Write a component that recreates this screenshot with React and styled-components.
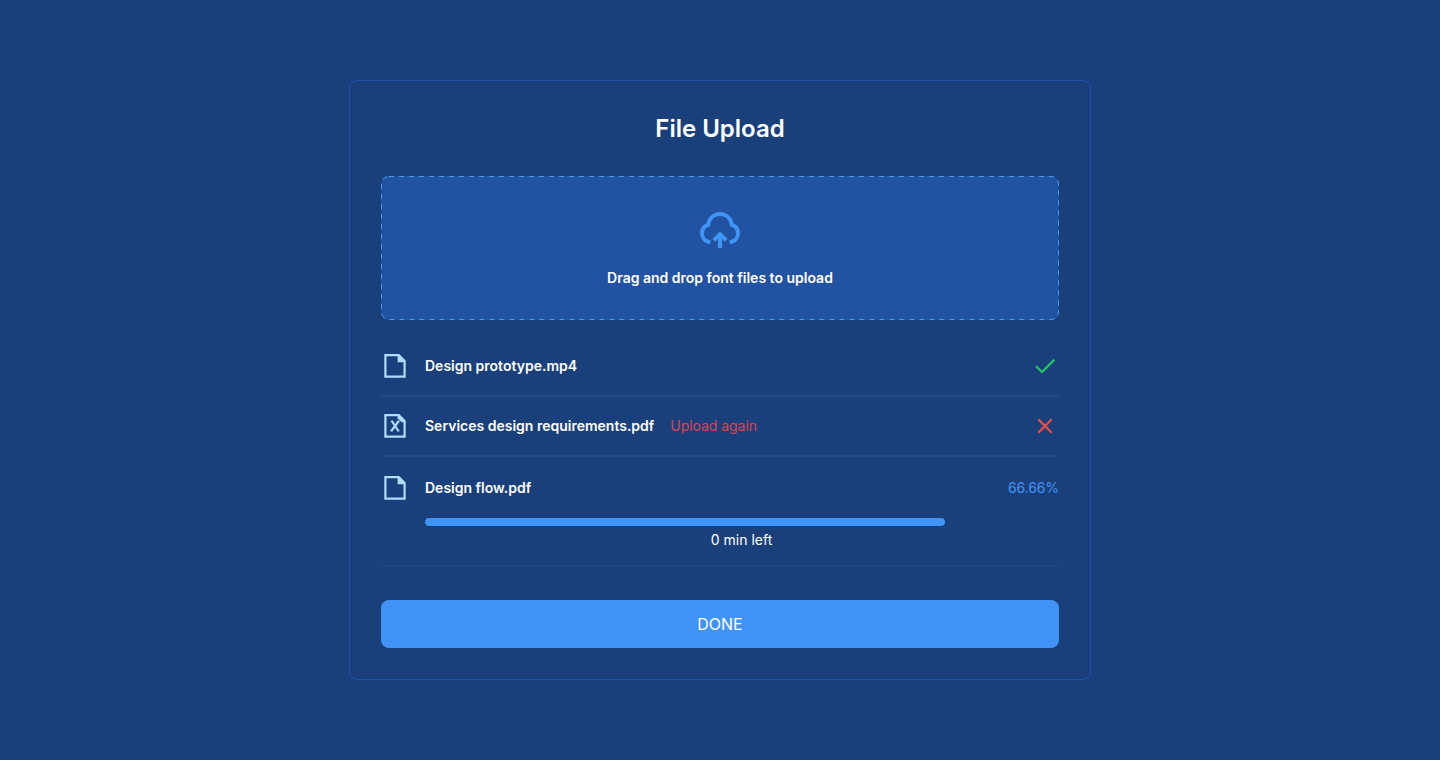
import React from "react";
import styled, { createGlobalStyle } from "styled-components";

const GlobalStyle = createGlobalStyle`
  *, *::before, *::after { box-sizing: border-box; }
  body {
    margin: 0;
    background: #1a407c;
    color: #fff;
    font-family: Inter, "Liberation Sans", sans-serif;
    font-size: 14px;
  }
`;

const Page = styled.main`
  height: 760px;
  display: flex;
  align-items: center;
  justify-content: center;
`;

const Card = styled.section`
  width: 742px;
  height: 600px;
  padding: 31px;
  border: 1px solid #2253a2;
  border-radius: 8px;
  display: flex;
  flex-direction: column;
`;

const Title = styled.h1`
  margin: 0 0 30px;
  font-size: 24px;
  line-height: 34px;
  font-weight: 600;
  text-align: center;
`;

const DropZone = styled.div`
  position: relative;
  height: 144px;
  flex: none;
  display: flex;
  flex-direction: column;
  align-items: center;
  padding-top: 34px;
  gap: 18px;
  background: #2253a2;
  border-radius: 8px;
`;

const DashedOutline = styled.svg`
  position: absolute;
  inset: 0;
  width: 100%;
  height: 100%;
`;

const DropText = styled.p`
  margin: 0;
  font-size: 14px;
  line-height: 20px;
  font-weight: 600;
`;

const FileList = styled.ul`
  list-style: none;
  margin: 17px 0 0;
  padding: 0;
`;

const FileItem = styled.li`
  height: ${(p) => (p.$tall ? "110px" : "60px")};
  padding-top: ${(p) => (p.$tall ? "16px" : "14px")};
  border-bottom: 2px solid ${(p) => (p.$tall ? "#1e4683" : "#204a8a")};
`;

const FileRow = styled.div`
  display: flex;
  align-items: center;
  height: 30px;
  padding-left: 2px;
`;

const FileName = styled.span`
  margin-left: 18px;
  padding-bottom: 2px;
  font-weight: 600;
`;

const Retry = styled.a`
  margin-left: 16px;
  padding-bottom: 2px;
  letter-spacing: -0.05px;
  color: #d8454f;
`;

const Status = styled.div`
  margin-left: auto;
  margin-right: 2px;
  display: flex;
`;

const Percent = styled.span`
  margin-left: auto;
  padding-bottom: 2px;
  letter-spacing: -0.1px;
  color: #4094f7;
`;

const Progress = styled.div`
  margin: 15px 0 0 44px;
  height: 8px;
`;

const ProgressBar = styled.div`
  width: ${(p) => p.$width};
  height: 100%;
  border-radius: 4px;
  background: #4094f7;
`;

const TimeLeft = styled.p`
  margin: 4px 1px 0 44px;
  line-height: 20px;
  text-align: center;
`;

const DoneButton = styled.button`
  margin-top: auto;
  height: 48px;
  flex: none;
  border: 0;
  border-radius: 8px;
  background: #4094f7;
  color: #fff;
  font-family: inherit;
  font-size: 16px;
`;

const CloudIcon = () => (
  <svg width="42" height="40" viewBox="0 0 42 40" fill="none" stroke="#4094f7" strokeWidth="4">
    <path d="M11.3 32C6 31.6 3 27.6 3 23.2C3 19 5.4 16 9.1 14.8C10.2 8.4 14.8 4 21 4C27.2 4 31.8 8.4 32.9 14.8C36.6 16 39 19 39 23.2C39 27.6 36 31.6 30.7 32" />
    <path d="M21 38V24.5M14.9 30.3L21 24.2L27.1 30.3" />
  </svg>
);

const FileIcon = ({ failed }) => (
  <svg width="24" height="26" viewBox="0 0 24 26" fill="none" stroke="#b0dcff" strokeWidth="2.2">
    <path d="M2.4 2.2H15.8L21.6 8V23.7H2.4Z" />
    {failed ? (
      <>
        <path d="M14.6 1.4L22.4 9.2H18.6L14.6 5.2Z" fill="#b0dcff" stroke="none" />
        <path d="M8.8 8L15.4 18M15.8 8L8.2 18" strokeWidth="2.2" />
        <path d="M7.6 8.2H10.2M14.2 8.2H16.6M7.2 17.8H9.6M14 17.8H16.6" strokeWidth="1" />
      </>
    ) : (
      <path d="M14.6 1.4L22.4 9.2H14.6Z" fill="#b0dcff" stroke="none" />
    )}
  </svg>
);

const CheckIcon = () => (
  <svg width="24" height="24" viewBox="0 0 24 24" fill="none" stroke="#27c264" strokeWidth="2.2">
    <path d="M2.9 12L9 18L21.4 5.6" />
  </svg>
);

const CrossIcon = () => (
  <svg width="24" height="24" viewBox="0 0 24 24" fill="none" stroke="#ef4e43" strokeWidth="2.2">
    <path d="M5.3 5.3L18.7 18.7M18.7 5.3L5.3 18.7" />
  </svg>
);

export default function App() {
  return (
    <Page>
      <GlobalStyle />
      <Card>
        <Title>File Upload</Title>
        <DropZone>
          <DashedOutline>
            <rect x="0.5" y="0.5" width="677" height="143" rx="7.5" fill="none" stroke="#4e9bf0" strokeDasharray="5 5" />
          </DashedOutline>
          <CloudIcon />
          <DropText>Drag and drop font files to upload</DropText>
        </DropZone>
        <FileList>
          <FileItem>
            <FileRow>
              <FileIcon />
              <FileName>Design prototype.mp4</FileName>
              <Status><CheckIcon /></Status>
            </FileRow>
          </FileItem>
          <FileItem>
            <FileRow>
              <FileIcon failed />
              <FileName>Services design requirements.pdf</FileName>
              <Retry>Upload again</Retry>
              <Status><CrossIcon /></Status>
            </FileRow>
          </FileItem>
          <FileItem $tall>
            <FileRow>
              <FileIcon />
              <FileName>Design flow.pdf</FileName>
              <Percent>66.66%</Percent>
            </FileRow>
            <Progress><ProgressBar $width="520px" /></Progress>
            <TimeLeft>0 min left</TimeLeft>
          </FileItem>
        </FileList>
        <DoneButton>DONE</DoneButton>
      </Card>
    </Page>
  );
}
